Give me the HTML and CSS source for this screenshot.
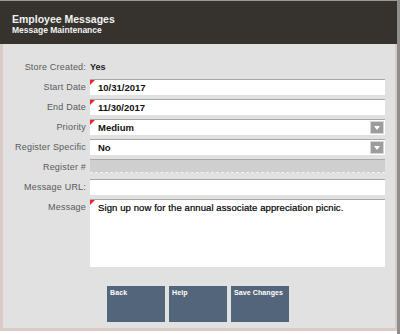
FILE: index.html
```html
<!DOCTYPE html>
<html lang="en">
<head>
  <meta charset="UTF-8"/>
  <title>Employee Messages</title>
  <link rel="stylesheet" href="styles.css">
</head>
<body>
  <div class="window">
    <div class="screen">
      <div class="header">
        <div class="title">Employee Messages</div>
        <div class="subtitle">Message Maintenance</div>
      </div>

      <div class="content">
        <div class="form">
          <div class="label">Store Created:</div>
          <div class="static">Yes</div>

          <div class="label">Start Date</div>
          <div class="field required">10/31/2017</div>

          <div class="label">End Date</div>
          <div class="field required">11/30/2017</div>

          <div class="label">Priority</div>
          <div class="field required select">Medium<span class="arrow"></span></div>

          <div class="label">Register Specific</div>
          <div class="field select">No<span class="arrow"></span></div>

          <div class="label">Register #</div>
          <div class="field disabled"></div>

          <div class="label">Message URL:</div>
          <div class="field"></div>

          <div class="label">Message</div>
          <div class="field required area">Sign up now for the annual associate appreciation picnic.</div>
        </div>

        <div class="buttons">
          <div class="btn">Back</div>
          <div class="btn">Help</div>
          <div class="btn">Save Changes</div>
        </div>
      </div>
    </div>
    <div class="edge"></div>
  </div>
</body>
</html>
```

FILE: styles.css
```css
* {
  margin: 0;
  padding: 0;
  box-sizing: border-box;
}

html, body {
  height: 100%;
  background: #fff;
  font-family: 'Liberation Sans', Arial, sans-serif;
}

.window {
  display: flex;
  width: 400px;
  height: 334px;
}

.screen {
  width: 397px;
  display: flex;
  flex-direction: column;
}

.edge {
  width: 3px;
  background: #8e8e8e;
}

/* HEADER */
.header {
  height: 44px;
  background: #36332f;
  border-top: 1px solid #9a9a9a;
  padding: 13px 0 0 12px;
  color: #f2f2f2;
  font-weight: bold;
}

.title {
  font-size: 10.5px;
  line-height: 11px;
}

.subtitle {
  font-size: 8.5px;
  line-height: 11px;
}

/* CONTENT */
.content {
  height: 287px;
  background: #e1e1e1;
  border-left: 3px solid #d8ccc4;
  border-right: 2px solid #d8ccc4;
  border-bottom: 3px solid #d8ccc4;
}

.form {
  display: grid;
  grid-template-columns: 83px 295px;
  column-gap: 4px;
  row-gap: 4px;
  padding-top: 15px;
}

.label {
  font-size: 9px;
  color: #5a5a5a;
  text-align: right;
  line-height: 16px;
  letter-spacing: 0.2px;
}

.static {
  font-size: 9px;
  font-weight: bold;
  color: #222;
  line-height: 16px;
}

.field {
  position: relative;
  height: 16px;
  background: #fff;
  border-top: 1px solid #a8a8a8;
  font-size: 9.5px;
  font-weight: bold;
  color: #111;
  line-height: 15px;
  padding-left: 8px;
}

.field.required::before {
  content: "";
  position: absolute;
  left: 0;
  top: 0;
  border-top: 5px solid #e8232a;
  border-right: 5px solid transparent;
}

.field.disabled {
  background: #cfcfcf;
  height: 14px;
  border-bottom: 1px dashed #f2f2f2;
}

.field.area {
  height: 68px;
  font-weight: normal;
  color: #000;
  -webkit-text-stroke: 0.2px #000;
  padding-top: 2px;
  line-height: 12px;
  letter-spacing: 0.1px;
}

.arrow {
  position: absolute;
  right: 1px;
  top: 1px;
  width: 14px;
  height: 13px;
  background: #9c9c9c;
  border: 1px solid #d6d6d6;
}

.arrow::after {
  content: "";
  position: absolute;
  left: 3px;
  top: 4px;
  border-top: 4px solid #fff;
  border-left: 3px solid transparent;
  border-right: 3px solid transparent;
}

/* BUTTONS */
.buttons {
  display: flex;
  gap: 4px;
  padding: 19px 0 0 104px;
}

.btn {
  width: 58px;
  height: 36px;
  background: #53657a;
  color: #fff;
  font-size: 7px;
  font-weight: bold;
  letter-spacing: 0.1px;
  padding: 3px 0 0 3px;
}
```
